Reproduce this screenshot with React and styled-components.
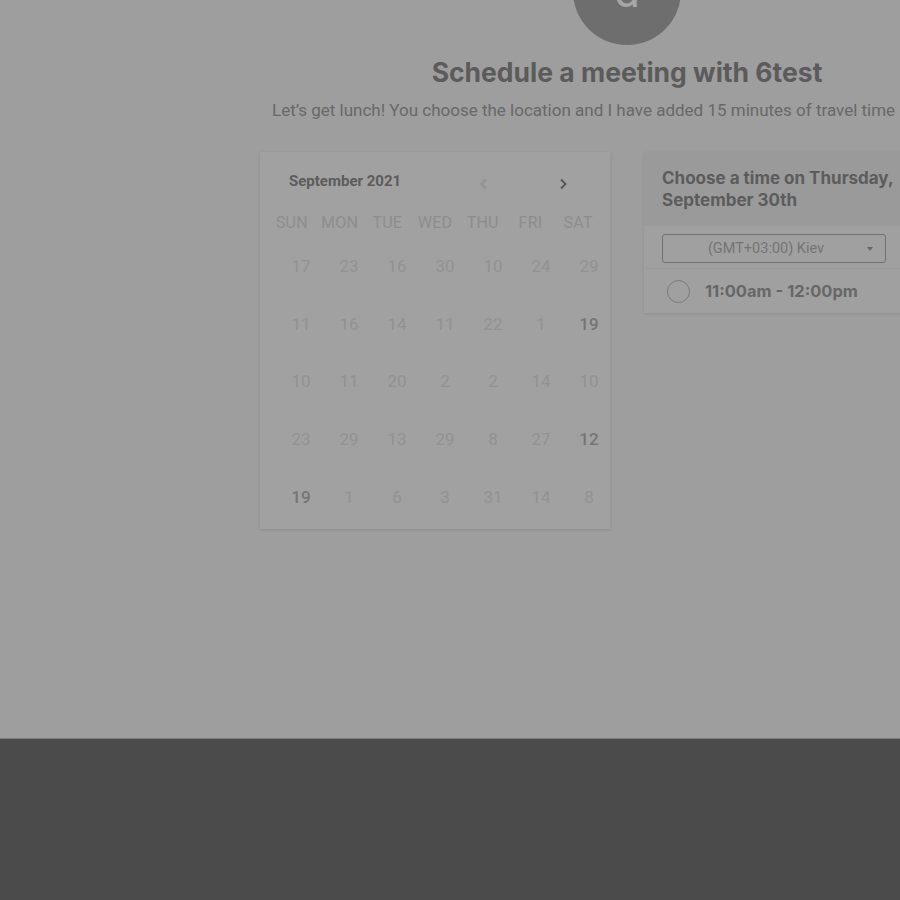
import React from "react";
import styled, { createGlobalStyle } from "styled-components";

const GlobalStyle = createGlobalStyle`
  html, body {
    margin: 0;
    padding: 0;
    overflow: hidden;
    background: #4b4b4b;
  }
  body {
    font-family: Roboto, "Liberation Sans", sans-serif;
  }
`;

const Page = styled.div`
  width: 1254px;
  height: 900px;
  display: flex;
  flex-direction: column;
`;

const Main = styled.main`
  height: 738px;
  background: #9e9e9e;
  border-bottom: 1px solid #7c7c7c;
  display: flex;
  flex-direction: column;
  align-items: center;
  overflow: hidden;
`;

const Footer = styled.footer`
  flex: 1;
  background: #4b4b4b;
`;

const Avatar = styled.div`
  width: 108px;
  height: 108px;
  margin-top: -63px;
  border-radius: 50%;
  background: #6e6e6e;
  color: #a6a6a6;
  font-size: 46px;
  line-height: 108px;
  text-align: center;
  flex-shrink: 0;
`;

const Title = styled.h1`
  margin: 11px 0 0;
  font-family: Inter, "Liberation Sans", sans-serif;
  font-weight: 700;
  font-size: 26.5px;
  line-height: 32px;
  color: #5b5b5b;
`;

const Subtitle = styled.p`
  width: 734px;
  box-sizing: border-box;
  margin: 11px 0 0;
  padding: 0 12px;
  font-size: 17px;
  line-height: 22px;
  color: #686868;
  white-space: nowrap;
`;

const Columns = styled.div`
  width: 734px;
  margin-top: 31px;
  display: flex;
  align-items: flex-start;
  gap: 34px;
`;

const CalendarCard = styled.section`
  width: 350px;
  box-sizing: border-box;
  padding: 18px 8px 3px;
  background: #a1a1a1;
  box-shadow: 0 1px 3px rgba(0, 0, 0, 0.12);
`;

const CalHeader = styled.div`
  display: flex;
  align-items: center;
  height: 22px;
  padding-left: 21px;
`;

const Month = styled.span`
  font-size: 15px;
  font-weight: 700;
  color: #5c5c5c;
`;

const Nav = styled.div`
  margin-left: auto;
  margin-right: 19px;
  display: flex;
  gap: 39px;
  margin-top: 6px;
`;

const NavButton = styled.span`
  width: 40px;
  display: flex;
  justify-content: center;
  color: ${(p) => (p.$disabled ? "#8f8f8f" : "#555555")};
`;

const WeekRow = styled.div`
  margin-top: 18px;
  display: grid;
  grid-template-columns: repeat(7, 1fr);
  height: 24px;
  align-items: center;
`;

const WeekDay = styled.span`
  text-align: center;
  font-size: 16px;
  color: #8d8d8d;
  letter-spacing: 0.2px;
`;

const DayGrid = styled.div`
  margin: 3px 0 0 9px;
  display: grid;
  grid-template-columns: repeat(7, 48px);
  grid-auto-rows: 57.75px;
  align-items: center;
`;

const Day = styled.span`
  text-align: center;
  font-size: 17px;
  color: ${(p) => (p.$active ? "#757575" : "#929292")};
  font-weight: ${(p) => (p.$active ? 500 : 400)};
`;

const TimeCard = styled.section`
  width: 350px;
  background: #a0a0a0;
  box-shadow: 0 1px 3px rgba(0, 0, 0, 0.1);
`;

const TimeHeader = styled.div`
  background: #9a9a9a;
  padding: 15px 18px;
  font-family: Inter, "Liberation Sans", sans-serif;
  font-weight: 700;
  font-size: 17px;
  line-height: 22px;
  color: #5c5c5c;
`;

const ZoneRow = styled.div`
  padding: 8px 18px 5px;
  border-bottom: 1px solid #9b9b9b;
`;

const ZoneSelect = styled.div`
  width: 224px;
  height: 29px;
  box-sizing: border-box;
  border: 1px solid #707070;
  border-radius: 3px;
  display: flex;
  align-items: center;
  position: relative;
  justify-content: center;
  font-size: 14.5px;
  color: #747474;
  padding-right: 16px;
`;

const Caret = styled.span`
  position: absolute;
  right: 12px;
  top: 12px;
  width: 0;
  height: 0;
  border-left: 3.5px solid transparent;
  border-right: 3.5px solid transparent;
  border-top: 4px solid #666666;
`;

const Slot = styled.div`
  height: 44px;
  display: flex;
  align-items: center;
  padding-left: 23px;
  gap: 15px;
`;

const Radio = styled.span`
  width: 23px;
  height: 23px;
  box-sizing: border-box;
  border: 1.5px solid #7a7a7a;
  border-radius: 50%;
`;

const SlotText = styled.span`
  font-family: Inter, "Liberation Sans", sans-serif;
  font-weight: 700;
  font-size: 16.5px;
  color: #676767;
`;

const weekDays = ["SUN", "MON", "TUE", "WED", "THU", "FRI", "SAT"];

const days = [
  [17, 23, 16, 30, 10, 24, 29],
  [11, 16, 14, 11, 22, 1, 19],
  [10, 11, 20, 2, 2, 14, 10],
  [23, 29, 13, 29, 8, 27, 12],
  [19, 1, 6, 3, 31, 14, 8],
];

const activeCells = ["1-6", "3-6", "4-0"];

function Chevron({ dir }) {
  return (
    <svg width="12" height="12" viewBox="0 0 12 12" fill="none">
      <path
        d={dir === "left" ? "M8 1.5 L3.5 6 L8 10.5" : "M4 1.5 L8.5 6 L4 10.5"}
        stroke="currentColor"
        strokeWidth="1.8"
      />
    </svg>
  );
}

export default function App() {
  return (
    <>
      <GlobalStyle />
      <Page>
        <Main>
          <Avatar>d</Avatar>
          <Title>Schedule a meeting with 6test</Title>
          <Subtitle>
            Let’s get lunch! You choose the location and I have added 15 minutes of travel time
          </Subtitle>
          <Columns>
            <CalendarCard>
              <CalHeader>
                <Month>September 2021</Month>
                <Nav>
                  <NavButton $disabled>
                    <Chevron dir="left" />
                  </NavButton>
                  <NavButton>
                    <Chevron dir="right" />
                  </NavButton>
                </Nav>
              </CalHeader>
              <WeekRow>
                {weekDays.map((d) => (
                  <WeekDay key={d}>{d}</WeekDay>
                ))}
              </WeekRow>
              <DayGrid>
                {days.map((row, r) =>
                  row.map((n, c) => (
                    <Day key={`${r}-${c}`} $active={activeCells.includes(`${r}-${c}`)}>
                      {n}
                    </Day>
                  ))
                )}
              </DayGrid>
            </CalendarCard>
            <TimeCard>
              <TimeHeader>Choose a time on Thursday, September 30th</TimeHeader>
              <ZoneRow>
                <ZoneSelect>
                  (GMT+03:00) Kiev
                  <Caret />
                </ZoneSelect>
              </ZoneRow>
              <Slot>
                <Radio />
                <SlotText>11:00am - 12:00pm</SlotText>
              </Slot>
            </TimeCard>
          </Columns>
        </Main>
        <Footer />
      </Page>
    </>
  );
}
